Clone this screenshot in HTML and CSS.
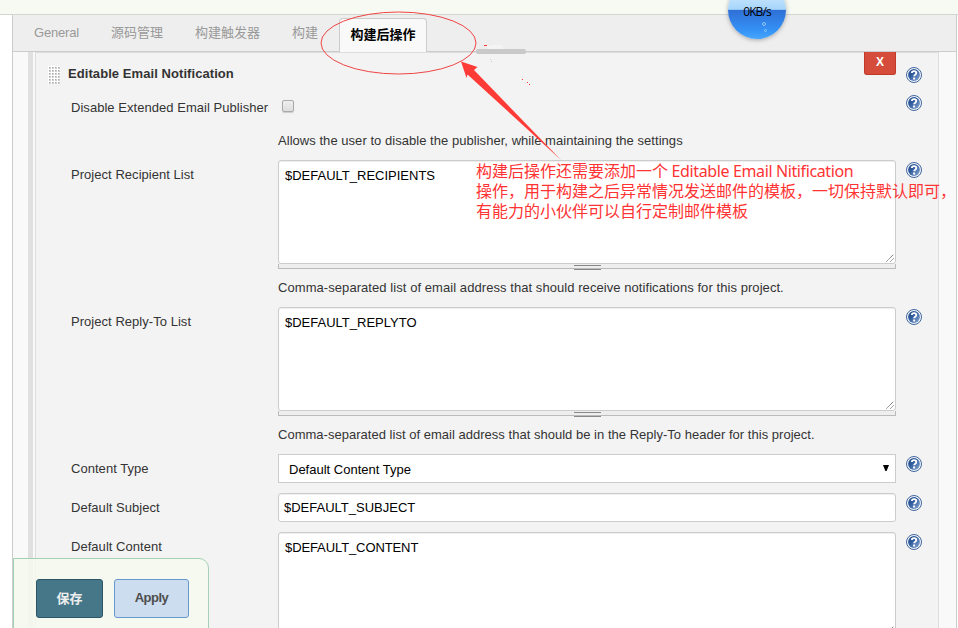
FILE: index.html
```
<!DOCTYPE html>
<html lang="zh">
<head>
<meta charset="utf-8">
<title>Editable Email Notification</title>
<link rel="stylesheet" href="styles.css">
</head>
<body>
<svg class="defs" width="0" height="0">
  <defs>
    <linearGradient id="hg" x1="0" y1="0" x2="1" y2="1"><stop offset="0" stop-color="#204a87"/><stop offset=".4" stop-color="#2f5c9e"/><stop offset="1" stop-color="#8eabd2"/></linearGradient>
    <symbol id="help" viewBox="0 0 16 16">
      <circle cx="8" cy="8" r="7.5" fill="#f4f7fb" stroke="#40669f"/>
      <circle cx="8" cy="8" r="5.9" fill="url(#hg)"/>
      <path d="M5.8 6.1C5.8 3.4 10.3 3.5 10.3 6C10.3 7.7 8.1 7.6 8.1 9.3" fill="none" stroke="#fff" stroke-width="1.9"/>
      <rect x="7.1" y="10.5" width="2" height="2" fill="#fff"/>
    </symbol>
    <symbol id="grip" viewBox="0 0 8 8"><path d="M.5 7.5L7.5 .5M4.5 7.5L7.5 4.5" stroke="#555" stroke-width="1" stroke-dasharray="1.1 .5" fill="none"/></symbol>
    <pattern id="dots" width="3" height="3" patternUnits="userSpaceOnUse"><rect width="3" height="3" fill="#fff"/><rect x="1" y="1" width="2" height="2" fill="#ccc"/><rect x="1" y="1" width="1" height="1" fill="#aaa"/></pattern>
  </defs>
</svg>
<div class="page">
  <header class="strip"></header>
  <main class="frame">
    <nav class="tabs">
      <a class="tab general">General</a>
      <a class="tab source">源码管理</a>
      <a class="tab trigger">构建触发器</a>
      <a class="tab build">构建</a>
      <a class="tab active">构建后操作</a>
    </nav>
    <div class="body">
      <div class="rail"></div>
      <section class="panel">
        <div class="row title-row">
          <h1 class="title"><svg class="drag"><rect width="12" height="18" fill="url(#dots)"/></svg><b>Editable Email Notification</b></h1>
          <button class="remove">X</button>
          <svg class="help"><use href="#help"/></svg>
        </div>
        <div class="row disable-row">
          <label class="label">Disable Extended Email Publisher</label>
          <div class="field"><span class="check"></span></div>
          <svg class="help"><use href="#help"/></svg>
        </div>
        <p class="desc first"><span class="d1">Allows the user to disable the publisher, while maintaining the settings</span></p>
        <div class="row">
          <label class="label">Project Recipient List</label>
          <div class="field"><div class="area"><span>$DEFAULT_RECIPIENTS</span><svg class="grip"><use href="#grip"/></svg></div><div class="handle"></div></div>
          <svg class="help"><use href="#help"/></svg>
        </div>
        <p class="desc"><span class="d2">Comma-separated list of email address that should receive notifications for this project.</span></p>
        <div class="row">
          <label class="label">Project Reply-To List</label>
          <div class="field"><div class="area"><span>$DEFAULT_REPLYTO</span><svg class="grip"><use href="#grip"/></svg></div><div class="handle"></div></div>
          <svg class="help"><use href="#help"/></svg>
        </div>
        <p class="desc"><span class="d3">Comma-separated list of email address that should be in the Reply-To header for this project.</span></p>
        <div class="row spaced">
          <label class="label">Content Type</label>
          <div class="field"><div class="select"><span>Default Content Type</span><svg width="6" height="6"><path d="M0 0h6L3.6 6H2.4z"/></svg></div></div>
          <svg class="help"><use href="#help"/></svg>
        </div>
        <div class="row spaced">
          <label class="label">Default Subject</label>
          <div class="field"><div class="text">$DEFAULT_SUBJECT</div></div>
          <svg class="help"><use href="#help"/></svg>
        </div>
        <div class="row">
          <label class="label">Default Content</label>
          <div class="field"><div class="area content"><span>$DEFAULT_CONTENT</span><svg class="grip"><use href="#grip"/></svg></div></div>
          <svg class="help"><use href="#help"/></svg>
        </div>
      </section>
    </div>
  </main>
  <div class="actions"><button class="save">保存</button><button class="apply">Apply</button></div>
  <div class="speed"><span>0KB/s</span><i></i><i class="small"></i></div>
  <svg class="marks" width="958" height="200">
    <rect x="476" y="49" width="50" height="5" rx="2" fill="#c9c9c9"/>
    <path d="M487 46.500Q500 43 503 47v2H487z" fill="#f4f4f4"/>
    <path d="M484 45.500h3M522 79.500h1M527 82.500h1M529 84.500h1" stroke="#f33"/>
    <path d="M490 59.500h1M491 61.500h1" stroke="#ccc"/>
    <ellipse cx="398.500" cy="43" rx="77.500" ry="31" fill="none" stroke="#f04444" stroke-width="1"/>
    <path d="M461 61.500L477.500 67L474 70L561 160L467.500 74.500L466.500 78z" fill="#ff3b38"/>
  </svg>
  <div class="note"><div>构建后操作还需要添加一个 <span>Editable Email Nitification</span></div><div>操作，用于构建之后异常情况发送邮件的模板，一切保持默认即可，</div><div>有能力的小伙伴可以自行定制邮件模板</div></div>
</div>
</body>
</html>
```
FILE: styles.css
```
* { box-sizing: border-box; }
body { margin: 0; background: #fff; color: #333; font: 13px/20px "Liberation Sans", "Noto Sans CJK SC", sans-serif; }
.defs { position: absolute; }
.page { position: relative; width: 958px; height: 628px; overflow: hidden; }
.strip { height: 15px; background: #f6faf2; border-bottom: 1px solid #d3d7cf; }
.frame { width: 945px; height: 613px; margin-left: 12px; border: solid #ccc; border-width: 0 1px; background: #f9f9f9; display: flex; flex-direction: column; }
.tabs { display: flex; flex: none; height: 37px; background: #eee; border-bottom: 1px solid #ccc; padding-left: 21px; align-items: center; color: #999; }
.tab { white-space: nowrap; line-height: 36px; }
.general { width: 77px; line-height: 38px; letter-spacing: -.2px; }
.source { width: 84px; }
.trigger { width: 97px; }
.build { width: 47px; }
.active { align-self: flex-end; width: 88px; height: 34px; margin-bottom: -1px; line-height: 31px; text-align: center; background: #f9f9f9; border: 1px solid #ccc; border-bottom: 0; border-radius: 4px 4px 0 0; color: #000; font-weight: bold; }
.body { display: flex; height: 576px; padding-left: 15px; overflow: hidden; }
.rail { width: 5px; margin-right: 2px; background: #e0e0e0; }
.panel { width: 904px; height: 700px; background: #f3f3f3; border: 1px solid #ddd; border-width: 1px 1px 0; }
.row { display: grid; grid-template-columns: 207px 618px 16px; padding-left: 35px; align-items: start; }
.row .help { margin: 2px 0 0 10px; }
.help { width: 16px; height: 16px; }
.label { line-height: 30px; white-space: nowrap; letter-spacing: .04px; }
.title-row { height: 40px; grid-template-columns: 816px 32px 16px; padding-left: 12px; }
.title { display: flex; align-items: center; gap: 8px; margin: 11px 0 0; font-size: 13px; line-height: 20px; letter-spacing: .07px; }
.drag { width: 12px; height: 18px; margin-top: 2px; }
.title-row .help { margin-top: 14px; }
.remove { height: 23px; margin-top: -1px; padding: 0 0 2px; border: 1px solid #c0392b; border-top: 0; border-radius: 0 0 3px 3px; background: #d54c3b; color: #fff; font: bold 12px "Liberation Sans", sans-serif; }
.disable-row { height: 37px; }
.check { display: block; width: 12px; height: 12px; margin: 7px 0 0 4px; border: 1px solid #aaa; border-radius: 2px; background: linear-gradient(#eee, #ddd); box-shadow: 0 1px 1px #ccc; }
.desc { margin: 0; height: 38px; padding-left: 242px; line-height: 38px; white-space: nowrap; }
.desc.first { height: 30px; line-height: 22px; }
.d1 { letter-spacing: .04px; }
.d2 { letter-spacing: .065px; }
.d3 { letter-spacing: .02px; }
.area { position: relative; height: 104px; padding: 5px 6px; border: 1px solid #ccc; border-radius: 3px; background: #fff; color: #000; box-shadow: inset 0 1px 1px #eee; }
.handle { position: relative; height: 5px; border: solid #bbb; border-width: 0 1px 1px; background: #eee; }
.handle::after { content: ""; position: absolute; left: 295px; top: 1px; width: 27px; height: 3px; border: solid #888; border-width: 1px 0; }
.grip { position: absolute; right: 1px; bottom: 1px; width: 8px; height: 8px; }
.spaced { height: 39px; }
.select, .text { height: 29px; border: 1px solid #ccc; background: #fff; color: #000; }
.select { display: flex; align-items: center; justify-content: space-between; padding: 2px 6px 0 10px; }
.select svg { margin-top: -4px; }
.text { padding-left: 5px; line-height: 27px; border-radius: 3px; box-shadow: inset 0 1px 1px #eee; }
.area.content { letter-spacing: -.1px; }
.actions { position: absolute; left: 13px; top: 558px; width: 196px; height: 80px; display: flex; gap: 11px; padding: 20px 0 0 22px; border: 1px solid #a4d1b6; border-radius: 0 10px 0 0; background: rgba(245,249,239,.85); }
.actions button { height: 39px; padding: 0 0 2px; border-radius: 3px; font: bold 13px "Liberation Sans", "Noto Sans CJK SC", sans-serif; }
.save { width: 67px; background: #457789; border: 1px solid #2c5666; color: #eee; }
.apply { width: 75px; background: #cbddee; border: 1px solid #6799cf; color: #4d4d4d; }
.actions .apply { letter-spacing: -.5px; }
.speed { position: absolute; left: 728px; top: -19px; width: 58px; height: 58px; border-radius: 50%; background: linear-gradient(#e8f5ff 0, #a6d5fb 49%, #2e6fd6 50%, #3592f5 85%, #48a7ff); box-shadow: 0 1px 4px #6668; color: #000; text-align: center; font: 12px/20px "Open Sans", sans-serif; }
.speed span { position: absolute; left: 0; top: 21px; width: 58px; letter-spacing: -.9px; }
.speed i { position: absolute; left: 34px; top: 41px; width: 4px; height: 4px; border: 1px solid #8cc8ff; border-radius: 50%; }
.speed .small { left: 36px; top: 48px; width: 3px; height: 3px; }
.marks { position: absolute; left: 0; top: 0; }
.note { position: absolute; left: 476px; top: 160px; color: #f33; font: 16px/20px "Noto Sans CJK SC", sans-serif; white-space: nowrap; }
.note div { height: 20px; }
.note span { font-family: "Noto Sans", sans-serif; line-height: 18px; letter-spacing: -.38px; }
```
